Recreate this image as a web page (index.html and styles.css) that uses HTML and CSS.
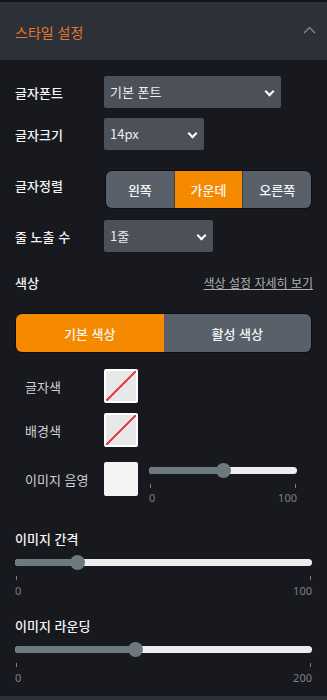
FILE: index.html
```html
<!DOCTYPE html>
<html lang="ko">
<head>
    <meta charset="UTF-8">
    <title>스타일 설정</title>
    <link rel="stylesheet" href="styles.css">
</head>
<body>
    <div class="panel">
        <!-- 헤더 -->
        <div class="panel-head">
            <span class="panel-title">스타일 설정</span>
            <svg class="chevron-up" width="13" height="8" viewBox="0 0 13 8">
                <path d="M1 7 L6.5 1.5 L12 7" fill="none" stroke="#8b9099" stroke-width="1.2"/>
            </svg>
        </div>

        <div class="panel-body">
            <div class="row row-font">
                <label class="label">글자폰트</label>
                <div class="select w-font">기본 폰트<span class="caret"></span></div>
            </div>
            <div class="row row-size">
                <label class="label">글자크기</label>
                <div class="select w-size">14px<span class="caret"></span></div>
            </div>
            <div class="row row-align">
                <label class="label label-up">글자정렬</label>
                <div class="segment">
                    <button>왼쪽</button>
                    <button class="on">가운데</button>
                    <button>오른쪽</button>
                </div>
            </div>
            <div class="row row-lines">
                <label class="label">줄 노출 수</label>
                <div class="select w-lines">1줄<span class="caret"></span></div>
            </div>

            <div class="color-head">
                <span class="label">색상</span>
                <a class="detail-link">색상 설정 자세히 보기</a>
            </div>

            <div class="tabs">
                <button class="on">기본 색상</button>
                <button>활성 색상</button>
            </div>

            <div class="swatch-row">
                <span class="sub-label">글자색</span>
                <span class="swatch none"></span>
            </div>
            <div class="swatch-row">
                <span class="sub-label">배경색</span>
                <span class="swatch none"></span>
            </div>
            <div class="swatch-row shadow-row">
                <span class="sub-label">이미지 음영</span>
                <span class="swatch white"></span>
                <div class="slider small">
                    <div class="track"><div class="fill" style="width: 50%"></div><div class="thumb" style="left: 50%"></div></div>
                    <div class="ticks"><span></span><span></span></div>
                    <div class="nums"><span>0</span><span>100</span></div>
                </div>
            </div>

            <div class="block gap-block">
                <div class="label">이미지 간격</div>
                <div class="slider">
                    <div class="track"><div class="fill" style="width: 21%"></div><div class="thumb" style="left: 21%"></div></div>
                    <div class="ticks"><span></span><span></span></div>
                    <div class="nums"><span>0</span><span>100</span></div>
                </div>
            </div>

            <div class="block round-block">
                <div class="label">이미지 라운딩</div>
                <div class="slider">
                    <div class="track"><div class="fill" style="width: 40.5%"></div><div class="thumb" style="left: 40.5%"></div></div>
                    <div class="ticks"><span></span><span></span></div>
                    <div class="nums"><span>0</span><span>200</span></div>
                </div>
            </div>
        </div>
        <div class="panel-foot"></div>
    </div>
</body>
</html>
```

FILE: styles.css
```css
body {
    margin: 0;
    padding: 0;
    background-color: #18191e;
    font-family: "Noto Sans CJK KR", "Noto Sans", sans-serif;
    color: #f2f2f2;
}

.panel {
    width: 327px;
    border-top: 2px solid #141519;
}

.panel-head {
    height: 58px;
    background-color: #2c3039;
    display: flex;
    align-items: center;
    justify-content: space-between;
    padding: 0 11px 0 15px;
}
.panel-title {
    color: #e8772b;
    font-size: 14px;
    margin-top: 2px;
}
.chevron-up {
    margin-top: -2px;
}

.panel-body {
    padding: 16px 15px 0 15px;
    height: 636px;
    box-sizing: border-box;
}

.label {
    font-size: 13px;
    font-weight: 500;
    color: #f4f4f4;
}

.row {
    display: flex;
    align-items: center;
}
.row > .label {
    width: 89px;
    flex-shrink: 0;
}
.label-up {
    margin-top: -8px;
}
.row-size { margin-top: 10px; }
.row-align { margin-top: 20px; }
.row-lines { margin-top: 11px; }

.select {
    position: relative;
    height: 32px;
    line-height: 32px;
    background-color: #4b5059;
    border-radius: 2px;
    font-size: 13px;
    color: #eceef0;
    padding-left: 6px;
    box-sizing: border-box;
}
.w-font { width: 177px; }
.w-size { width: 100px; }
.w-lines { width: 109px; }
.caret {
    position: absolute;
    right: 8px;
    top: 12px;
    width: 5px;
    height: 5px;
    border-right: 2px solid #fff;
    border-bottom: 2px solid #fff;
    transform: rotate(45deg);
}

.segment {
    display: flex;
    width: 207px;
    height: 39px;
    border: 1px solid #0c0d10;
    border-radius: 7px;
    overflow: hidden;
    box-sizing: border-box;
    margin-left: 1px;
}
.segment button,
.tabs button {
    flex: 1;
    border: none;
    margin: 0;
    padding: 0;
    font-family: inherit;
    font-size: 13px;
    font-weight: 500;
    color: #f6f6f6;
    background-color: #5a6069;
}
.segment button + button {
    border-left: 1px solid #3d424a;
}
.segment button.on,
.tabs button.on {
    background-color: #f58900;
}

.color-head {
    display: flex;
    justify-content: space-between;
    align-items: center;
    margin-top: 19px;
    height: 22px;
}
.detail-link {
    font-size: 12px;
    color: #aeb0b4;
    text-decoration: underline;
    margin-right: -1px;
    cursor: pointer;
}

.tabs {
    display: flex;
    margin-top: 20px;
    height: 40px;
    border: 1px solid #0c0d10;
    border-radius: 7px;
    overflow: hidden;
    box-sizing: border-box;
}
.tabs button {
    font-size: 13px;
}

.swatch-row {
    display: flex;
    align-items: center;
    margin-top: 16px;
}
.swatch-row + .swatch-row {
    margin-top: 10px;
}
.shadow-row {
    align-items: flex-start;
}
.shadow-row.swatch-row {
    margin-top: 15px;
}
.shadow-row .sub-label {
    margin-top: 8px;
}
.sub-label {
    width: 79px;
    padding-left: 10px;
    font-size: 13px;
    color: #cfd1d4;
    flex-shrink: 0;
}
.swatch {
    width: 34px;
    height: 34px;
    border-radius: 2px;
    box-sizing: border-box;
    border: 2px solid #fff;
    flex-shrink: 0;
}
.swatch.none {
    background: linear-gradient(to bottom right, #e8e8e8 calc(50% - 1px), #e8414a calc(50% - 1px), #e8414a calc(50% + 1px), #e8e8e8 calc(50% + 1px));
}
.swatch.white {
    background-color: #f3f4f4;
    border-color: #f3f4f4;
}

.slider {
    width: 100%;
}
.slider.small {
    width: 148px;
    margin-left: 11px;
    margin-top: 1px;
}
.track {
    position: relative;
    height: 7px;
    border-radius: 4px;
    background-color: #ededed;
    margin-top: 4px;
}
.fill {
    height: 7px;
    border-radius: 4px 0 0 4px;
    background-color: #6c7a7d;
}
.thumb {
    position: absolute;
    top: -4px;
    width: 15px;
    height: 15px;
    margin-left: -7px;
    border-radius: 50%;
    background-color: #6c7a7d;
}
.ticks {
    display: flex;
    justify-content: space-between;
    margin-top: 10px;
    padding: 0 1px;
}
.ticks span {
    width: 1px;
    height: 4px;
    background-color: #7b7d82;
}
.nums {
    display: flex;
    justify-content: space-between;
    font-size: 11px;
    color: #7d7f84;
    font-family: "Liberation Sans Narrow", "Noto Sans", sans-serif;
    margin-top: 2px;
}
.block .nums {
    margin-top: 3px;
}

.block .label {
    margin-bottom: 11px;
}
.gap-block { margin-top: 24px; }
.round-block { margin-top: 18px; }

.panel-foot {
    height: 4px;
    background-color: #2c3039;
}
```
